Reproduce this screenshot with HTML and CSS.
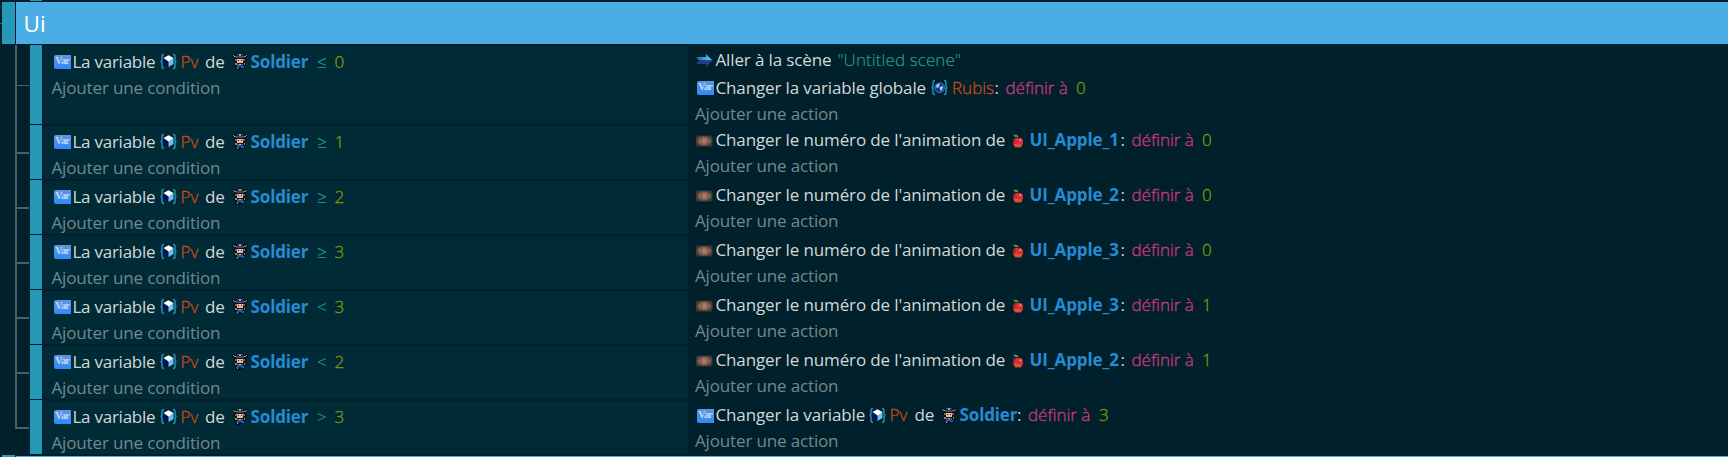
FILE: index.html
```
<!DOCTYPE html>
<html lang="fr">
<head>
<meta charset="utf-8">
<title>Ui</title>
<link rel="stylesheet" href="styles.css">
</head>
<body>
<svg class="defs" aria-hidden="true">
  <defs>
    <linearGradient id="garrow" x1="0" y1="0" x2="1" y2="0"><stop offset="0" stop-color="#175a86"/><stop offset=".55" stop-color="#3fa9e0"/><stop offset="1" stop-color="#5cc4f2"/></linearGradient>
    <radialGradient id="gskin"><stop offset="0" stop-color="#b28670"/><stop offset=".6" stop-color="#8d6653"/><stop offset="1" stop-color="#5b433a" stop-opacity=".7"/></radialGradient>
  </defs>
  <symbol id="box" viewBox="0 0 17 17">
    <path d="M4 1.500Q2 1.500 2 3.500V6.500Q2 8.500.5 8.500Q2 8.500 2 10.500V13.500Q2 15.500 4 15.500M13 1.500Q15 1.500 15 3.500V6.500Q15 8.500 16.500 8.500Q15 8.500 15 10.500V13.500Q15 15.500 13 15.500" fill="none" stroke="#2893b8" stroke-width="1.400"/>
    <path d="M8.500 2.500L13.500 5V11L8.500 14L3.500 11V5Z" fill="#0b1a3e"/>
    <path d="M3.700 5L8.500 7.800V14L3.700 11Z" fill="#06115a"/>
    <path d="M8.500 7.500L13.500 5V11L8.500 14Z" fill="#67c4ee"/>
    <path d="M8.500 2.300L13.500 5L8.500 8.500L3.500 5Z" fill="#fff"/>
  </symbol>
  <symbol id="globe" viewBox="0 0 17 17">
    <path d="M4 1.500Q2 1.500 2 3.500V6.500Q2 8.500.5 8.500Q2 8.500 2 10.500V13.500Q2 15.500 4 15.500M13 1.500Q15 1.500 15 3.500V6.500Q15 8.500 16.500 8.500Q15 8.500 15 10.500V13.500Q15 15.500 13 15.500" fill="none" stroke="#2893b8" stroke-width="1.400"/>
    <circle cx="8.700" cy="8.700" r="4.800" fill="#123583" stroke="#4b82cb" stroke-width="1"/>
    <path d="M5 6.500L8 4.500L9 6L7.500 8L7 9L5.500 8.500ZM8.500 8.500L11 7L12.300 8L11 11L9.500 12Z" fill="#a9d3f5"/>
  </symbol>
  <symbol id="soldier" viewBox="0 0 16 17" shape-rendering="crispEdges">
    <path d="M0 1h3v3h10V1h3v3h-2v2h1v2h-2v2h1v3h-2v2h-1v1H8v1H4v-1H3v-3H2v-2h1V8H1V6h1V4H0z" fill="#0b1017"/>
    <path d="M4 0h8v3H4z" fill="#0d1a2a"/>
    <path d="M1 2h1v1H1zM14 2h1v1h-1zM2 3h2v1H2zM12 3h2v1h-2z" fill="#a08c7c"/>
    <path d="M5 1h2v1H5zM9 1h2v1H9zM4 3h8v1H4zM4 4h8v1H4z" fill="#264f87"/>
    <path d="M7 1h2v2H7z" fill="#c29b52"/>
    <path d="M3 6h2v2H3zM11 6h2v2h-2z" fill="#8d5c47"/>
    <path d="M5 6h6v4H5z" fill="#e9b893"/>
    <path d="M6 7h1v1H6zM9 7h1v1H9z" fill="#29252b"/>
    <path d="M3 10h2v2H3zM12 10h1v2h-1z" fill="#b8794e"/>
    <path d="M5 11h6v3H5zM4 14h3v1H4zM9 13h3v2H9z" fill="#195aa8"/>
    <path d="M7 11h2v1H7zM5 15h1v1H5z" fill="#d3a66a"/>
  </symbol>
  <symbol id="arrow" viewBox="0 0 17 17">
    <path d="M0 5H10V2L16.500 8.500H3Z" fill="url(#garrow)"/>
    <path d="M3 8.500H16.500L10 15V12H.5Z" fill="#29388f"/>
  </symbol>
  <symbol id="anim" viewBox="0 0 17 17">
    <rect x="0" y="3.500" width="16.500" height="11" rx="2.500" fill="url(#gskin)"/>
    <path d="M5.500 5v8M11.500 5v8" stroke="#6d4c40" stroke-width="1" opacity=".65"/>
  </symbol>
  <symbol id="apple" viewBox="0 0 12 14">
    <path d="M1 5.500L3 4H9L11 6V10L9 13H3L1 10Z" fill="#d92f35"/>
    <path d="M1 5.500L3 4L4 5L2.500 7V10L1 9Z" fill="#8f1d30"/>
    <path d="M2 10H6L10 11L9 13H3Z" fill="#e2542f"/>
    <path d="M3 12.500H9V13.500H3Z" fill="#a6542a"/>
    <path d="M7.500 5.500h1.500v1.500H7.500z" fill="#ffb0a8"/>
    <path d="M5.500 1.500L6.500 4.500" stroke="#62382b" stroke-width="1.200"/>
    <path d="M1 .7H4.500L6 2V3H3Z" fill="#4f9b45"/>
  </symbol>
</svg>

<main class="sheet">
  <div class="previous"><i class="bar"></i></div>
  <header class="group">
    <i class="tick"></i><i class="handle"></i>
    <h1 class="title">Ui</h1>
  </header>

  <section class="events">
    <article class="event first">
      <i class="branch"></i><i class="bar"></i>
      <div class="conditions">
        <p class="line variable"><span class="var">Var</span><span class="tight">La variable</span><svg class="ic"><use href="#box"/></svg><span class="name">Pv</span><span>de</span><svg class="ic sprite"><use href="#soldier"/></svg><b>Soldier</b><span class="op">≤</span><span class="num">0</span></p>
        <p class="add">Ajouter une condition</p>
      </div>
      <div class="actions">
        <p class="line scene"><svg class="ic"><use href="#arrow"/></svg><span>Aller à la scène</span><span class="string">"Untitled scene"</span></p>
        <p class="line global"><span class="var">Var</span><span>Changer la variable globale</span><svg class="ic"><use href="#globe"/></svg><span class="name">Rubis</span><span>:</span><span class="set">définir à</span><span class="num">0</span></p>
        <p class="add">Ajouter une action</p>
      </div>
    </article>

    <article class="event">
      <i class="branch"></i><i class="bar"></i>
      <div class="conditions">
        <p class="line variable"><span class="var">Var</span><span class="tight">La variable</span><svg class="ic"><use href="#box"/></svg><span class="name">Pv</span><span>de</span><svg class="ic sprite"><use href="#soldier"/></svg><b>Soldier</b><span class="op">≥</span><span class="num">1</span></p>
        <p class="add">Ajouter une condition</p>
      </div>
      <div class="actions">
        <p class="line animation"><svg class="ic"><use href="#anim"/></svg><span class="long">Changer le numéro de l'animation de</span><svg class="ic fruit"><use href="#apple"/></svg><b>UI_Apple_1</b><span>:</span><span class="set">définir à</span><span class="num">0</span></p>
        <p class="add">Ajouter une action</p>
      </div>
    </article>

    <article class="event">
      <i class="branch"></i><i class="bar"></i>
      <div class="conditions">
        <p class="line variable"><span class="var">Var</span><span class="tight">La variable</span><svg class="ic"><use href="#box"/></svg><span class="name">Pv</span><span>de</span><svg class="ic sprite"><use href="#soldier"/></svg><b>Soldier</b><span class="op">≥</span><span class="num">2</span></p>
        <p class="add">Ajouter une condition</p>
      </div>
      <div class="actions">
        <p class="line animation"><svg class="ic"><use href="#anim"/></svg><span class="long">Changer le numéro de l'animation de</span><svg class="ic fruit"><use href="#apple"/></svg><b>UI_Apple_2</b><span>:</span><span class="set">définir à</span><span class="num">0</span></p>
        <p class="add">Ajouter une action</p>
      </div>
    </article>

    <article class="event">
      <i class="branch"></i><i class="bar"></i>
      <div class="conditions">
        <p class="line variable"><span class="var">Var</span><span class="tight">La variable</span><svg class="ic"><use href="#box"/></svg><span class="name">Pv</span><span>de</span><svg class="ic sprite"><use href="#soldier"/></svg><b>Soldier</b><span class="op">≥</span><span class="num">3</span></p>
        <p class="add">Ajouter une condition</p>
      </div>
      <div class="actions">
        <p class="line animation"><svg class="ic"><use href="#anim"/></svg><span class="long">Changer le numéro de l'animation de</span><svg class="ic fruit"><use href="#apple"/></svg><b>UI_Apple_3</b><span>:</span><span class="set">définir à</span><span class="num">0</span></p>
        <p class="add">Ajouter une action</p>
      </div>
    </article>

    <article class="event">
      <i class="branch"></i><i class="bar"></i>
      <div class="conditions">
        <p class="line variable"><span class="var">Var</span><span class="tight">La variable</span><svg class="ic"><use href="#box"/></svg><span class="name">Pv</span><span>de</span><svg class="ic sprite"><use href="#soldier"/></svg><b>Soldier</b><span class="op">&lt;</span><span class="num">3</span></p>
        <p class="add">Ajouter une condition</p>
      </div>
      <div class="actions">
        <p class="line animation"><svg class="ic"><use href="#anim"/></svg><span class="long">Changer le numéro de l'animation de</span><svg class="ic fruit"><use href="#apple"/></svg><b>UI_Apple_3</b><span>:</span><span class="set">définir à</span><span class="num">1</span></p>
        <p class="add">Ajouter une action</p>
      </div>
    </article>

    <article class="event">
      <i class="branch"></i><i class="bar"></i>
      <div class="conditions">
        <p class="line variable"><span class="var">Var</span><span class="tight">La variable</span><svg class="ic"><use href="#box"/></svg><span class="name">Pv</span><span>de</span><svg class="ic sprite"><use href="#soldier"/></svg><b>Soldier</b><span class="op">&lt;</span><span class="num">2</span></p>
        <p class="add">Ajouter une condition</p>
      </div>
      <div class="actions">
        <p class="line animation"><svg class="ic"><use href="#anim"/></svg><span class="long">Changer le numéro de l'animation de</span><svg class="ic fruit"><use href="#apple"/></svg><b>UI_Apple_2</b><span>:</span><span class="set">définir à</span><span class="num">1</span></p>
        <p class="add">Ajouter une action</p>
      </div>
    </article>

    <article class="event last">
      <i class="branch"></i><i class="bar"></i>
      <div class="conditions">
        <p class="line variable"><span class="var">Var</span><span class="tight">La variable</span><svg class="ic"><use href="#box"/></svg><span class="name">Pv</span><span>de</span><svg class="ic sprite"><use href="#soldier"/></svg><b>Soldier</b><span class="op">&gt;</span><span class="num">3</span></p>
        <p class="add">Ajouter une condition</p>
      </div>
      <div class="actions">
        <p class="line objvar"><span class="var">Var</span><span>Changer la variable</span><svg class="ic"><use href="#box"/></svg><span class="name">Pv</span><span>de</span><svg class="ic sprite"><use href="#soldier"/></svg><b>Soldier</b><span>:</span><span class="set">définir à</span><span class="num">3</span></p>
        <p class="add">Ajouter une action</p>
      </div>
    </article>
  </section>
  <footer class="group next"><i class="handle"></i><i class="title"></i></footer>
</main>
</body>
</html>
```
FILE: styles.css
```
* { box-sizing: border-box; }

body {
  margin: 0;
  background: #00212b;
  color: #d3d8d8;
  font: 17px/26px "Open Sans", "Noto Sans", sans-serif;
  overflow: hidden;
}

p, h1 { margin: 0; }
i { display: block; }

.defs { position: absolute; width: 0; height: 0; }

.sheet { height: 457px; overflow: hidden; }

.previous { height: 2px; padding-left: 30px; }
.previous .bar { width: 12px; height: 1px; background: #2699b9; }

.group { display: flex; height: 42px; }
.group .tick { width: 2px; height: 1px; margin-top: 21px; background: #47606b; }
.group .handle { width: 13px; margin-right: 1px; background: #2699b9; }
.group .title {
  flex: 1;
  padding-left: 7.5px;
  background: #4aaee4;
  color: #fff;
  font-size: 22.5px;
  font-weight: 400;
  line-height: 43px;
}
.group.next { height: 2px; padding-left: 2px; }
.group.next .title { margin-top: 1px; }

.events { padding: 1px 0 0 15px; }

.event { display: flex; height: 55px; }
.event.first { height: 80px; }

.branch { width: 15px; border-left: 2px solid #47606b; }
.branch::before {
  content: "";
  display: block;
  width: 12px;
  height: 2px;
  margin-top: 27px;
  background: #47606b;
}
.first .branch::before { height: 1px; margin-top: 40px; }
.last .branch { height: 29px; }

.bar { width: 12px; margin-bottom: 1px; background: #2699b9; }

.conditions {
  width: 644px;
  margin: 1px 0 1px 2px;
  padding: 2px 0 0 7px;
  background: #002b36;
}
.actions { flex: 1; padding: 2px 0 0 7px; }

.line { display: grid; align-items: center; height: 26px; padding-left: 2px; white-space: pre; letter-spacing: -0.13px; }
.conditions .line { height: 27px; }
.first .global { height: 27px; margin-top: 1px; }

.variable { grid-template-columns: 19.5px 87.5px 20.5px 24.5px 27px 18.5px 66.5px 17.5px auto; }
.scene { grid-template-columns: 18.5px 122px auto; }
.global { grid-template-columns: 18.5px 215.5px 21px 42.5px 11px 70.5px auto; }
.animation { grid-template-columns: 18.5px 296.5px 17.5px 91px 11px 70.5px auto; }
.objvar { grid-template-columns: 18.5px 153.5px 20.5px 25px 26.5px 18.5px 57.5px 11px 71px auto; }

.line b { color: #268bd2; font-weight: 700; }
.tight { letter-spacing: -0.25px; }
.long { letter-spacing: -0.13px; }
.name, .string, .set, .op, .num {
  font-weight: 300;
  letter-spacing: 0;
  -webkit-text-stroke: 0.3px currentColor;
}
.name { color: #cb4b16; }
.string { color: #2aa198; letter-spacing: 0.1px; -webkit-text-stroke-width: 0.1px; }
.set { color: #d33682; }
.op { color: #2aa198; -webkit-text-stroke-width: 0.1px; }
.num { color: #859900; }

.var {
  width: 16.5px;
  height: 14px;
  margin: 1px 0 0 1px;
  border-radius: 2px 0 0 2px;
  background: linear-gradient(#6295de, #2f8bfa);
  color: #c4dafa;
  font: bold 10px/12px "Liberation Serif", serif;
  letter-spacing: -0.6px;
  text-align: center;
}
.actions .var { margin-left: 0; }

.ic { display: block; width: 17px; height: 17px; }
.actions .ic:first-child { margin-left: -1px; }
.sprite { width: 16px; }
.fruit { width: 12px; height: 14px; margin-top: 2px; }

.add { color: #74878c; letter-spacing: -0.15px; }
.conditions .add { padding-left: 0.5px; }
```
